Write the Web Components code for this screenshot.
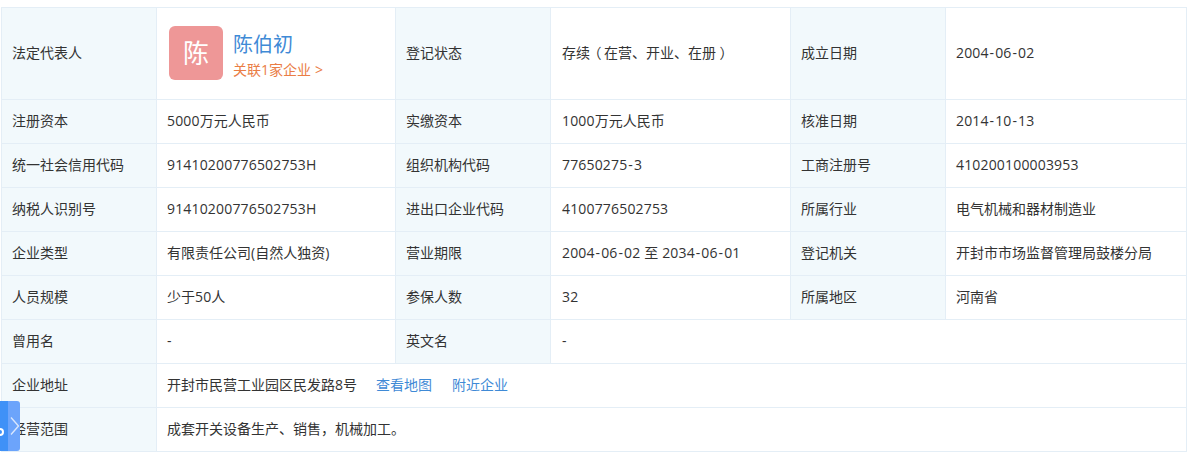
<!DOCTYPE html>
<html lang="zh">
<head>
<meta charset="utf-8">
<title>工商信息</title>
<style>
    html, body { margin: 0; background: #fff; }
    body {
        height: 454px;
        overflow: hidden;
        padding: 7px 0 0 1px;
        box-sizing: border-box;
        font: 14px/20px "Open Sans", "Noto Sans CJK SC", sans-serif;
        color: #333;
    }
    a { color: #3f8ad6; text-decoration: none; }
    .n { letter-spacing: .17px; }
    .h { margin: 0 .9px; }
    .p { font-feature-settings: "palt"; margin: 0 3px 0 4px; }
</style>
</head>
<body>
<side-tab></side-tab>
<info-table>
    <info-label>法定代表人</info-label>
    <info-value><boss-card name="陈伯初" mark="陈" note="关联1家企业"></boss-card></info-value>
    <info-label>登记状态</info-label>
    <info-value>存续<span class="p">（</span>在营、开业、在册<span class="p">）</span></info-value>
    <info-label>成立日期</info-label>
    <info-value><span class="n">2004<span class="h">-</span>06<span class="h">-</span>02</span></info-value>

    <info-label>注册资本</info-label>
    <info-value><span class="n">5000</span>万元人民币</info-value>
    <info-label>实缴资本</info-label>
    <info-value><span class="n">1000</span>万元人民币</info-value>
    <info-label>核准日期</info-label>
    <info-value><span class="n">2014<span class="h">-</span>10<span class="h">-</span>13</span></info-value>

    <info-label>统一社会信用代码</info-label>
    <info-value><span class="n">91410200776502753H</span></info-value>
    <info-label>组织机构代码</info-label>
    <info-value><span class="n">77650275<span class="h">-</span>3</span></info-value>
    <info-label>工商注册号</info-label>
    <info-value><span class="n">410200100003953</span></info-value>

    <info-label>纳税人识别号</info-label>
    <info-value><span class="n">91410200776502753H</span></info-value>
    <info-label>进出口企业代码</info-label>
    <info-value><span class="n">4100776502753</span></info-value>
    <info-label>所属行业</info-label>
    <info-value>电气机械和器材制造业</info-value>

    <info-label>企业类型</info-label>
    <info-value>有限责任公司(自然人独资)</info-value>
    <info-label>营业期限</info-label>
    <info-value><span class="n">2004<span class="h">-</span>06<span class="h">-</span>02 至 2034<span class="h">-</span>06<span class="h">-</span>01</span></info-value>
    <info-label>登记机关</info-label>
    <info-value>开封市市场监督管理局鼓楼分局</info-value>

    <info-label>人员规模</info-label>
    <info-value>少于<span class="n">50</span>人</info-value>
    <info-label>参保人数</info-label>
    <info-value><span class="n">32</span></info-value>
    <info-label>所属地区</info-label>
    <info-value>河南省</info-value>

    <info-label>曾用名</info-label>
    <info-value>-</info-value>
    <info-label>英文名</info-label>
    <info-value span="3">-</info-value>

    <info-label>企业地址</info-label>
    <info-value span="5">开封市民营工业园区民发路8号<a href="#" style="margin-left:19px">查看地图</a><a href="#" style="margin-left:20px">附近企业</a></info-value>

    <info-label>经营范围</info-label>
    <info-value span="5">成套开关设备生产、销售，机械加工。</info-value>
</info-table>

<script>
class InfoTable extends HTMLElement {
    constructor(){
        super();
        this.attachShadow({mode: "open"}).innerHTML = `
        <style>
            :host {
                display: grid;
                width: 1186px;
                box-sizing: border-box;
                grid-template-columns: 155px 239px 155px 240px 155px 241px;
                grid-template-rows: 92px;
                grid-auto-rows: 44px;
                border-top: 1px solid #e4eef6;
                border-left: 1px solid #e4eef6;
            }
        </style>
        <slot></slot>`;
    }
}

class InfoLabel extends HTMLElement {
    constructor(){
        super();
        this.attachShadow({mode: "open"}).innerHTML = `
        <style>
            :host {
                display: flex;
                align-items: center;
                box-sizing: border-box;
                padding: 0 0 2px 10px;
                background: #f2f9fc;
                border-right: 1px solid #e4eef6;
                border-bottom: 1px solid #e4eef6;
            }
        </style>
        <slot></slot>`;
    }
}

class InfoValue extends HTMLElement {
    constructor(){
        super();
        this.attachShadow({mode: "open"}).innerHTML = `
        <style>
            :host {
                display: flex;
                align-items: center;
                box-sizing: border-box;
                padding: 0 10px 2px 10px;
                white-space: nowrap;
                border-right: 1px solid #e4eef6;
                border-bottom: 1px solid #e4eef6;
            }
            /* the middle value column starts a pixel further in */
            :host(:nth-of-type(3n+2)) { padding-left: 11px; }
            .line { display: block; }
        </style>
        <div class="line"><slot></slot></div>`;
    }
    connectedCallback() {
        const span = this.getAttribute("span");
        if (span) this.style.gridColumn = "span " + span;
    }
}

class BossCard extends HTMLElement {
    constructor(){
        super();
        this.shadowDOM = this.attachShadow({mode: "open"});
    }
    connectedCallback() {
        this.shadowDOM.innerHTML = `
        <style>
            :host {
                display: flex;
                align-items: center;
                gap: 10px;
                padding: 0 0 0 2px;
            }
            .mark {
                width: 54px;
                height: 54px;
                border-radius: 6px;
                background: #ee9797;
                color: #fff;
                font-size: 26px;
                display: flex;
                align-items: center;
                justify-content: center;
            }
            .text { padding-top: 6px; }
            .name {
                font-size: 20px;
                line-height: 28px;
                color: #3f8ad6;
            }
            .note {
                font-size: 14px;
                line-height: 22px;
                color: #ea7d45;
            }
            .more { margin-left: 4px; }
        </style>
        <div class="mark">${this.getAttribute("mark")}</div>
        <div class="text">
            <div class="name">${this.getAttribute("name")}</div>
            <div class="note">${this.getAttribute("note")}<span class="more">&gt;</span></div>
        </div>`;
    }
}

class SideTab extends HTMLElement {
    constructor(){
        super();
        this.attachShadow({mode: "open"}).innerHTML = `
        <style>
            :host {
                position: fixed;
                left: 0;
                top: 401px;
                width: 20px;
                height: 50px;
                border-radius: 0 3px 3px 0;
                overflow: hidden;
                display: flex;
                background: #6ca4fb;
                z-index: 2;
            }
            .dark {
                width: 8px;
                background: #3f91f7;
                position: relative;
            }
            .dot {
                position: absolute;
                left: -4px;
                top: 27px;
                width: 4px;
                height: 4px;
                border: 2px solid #fff;
                border-radius: 50%;
            }
            svg { margin: 16px 0 0 2px; }
        </style>
        <div class="dark"><div class="dot"></div></div>
        <svg width="10" height="18" viewBox="0 0 10 18" fill="none" stroke="#d8e6fd" stroke-width="1.4"><path d="M1 .5 8.5 9 1 17.5"/></svg>`;
    }
}

customElements.define("info-table", InfoTable);
customElements.define("info-label", InfoLabel);
customElements.define("info-value", InfoValue);
customElements.define("boss-card", BossCard);
customElements.define("side-tab", SideTab);
</script>
</body>
</html>
